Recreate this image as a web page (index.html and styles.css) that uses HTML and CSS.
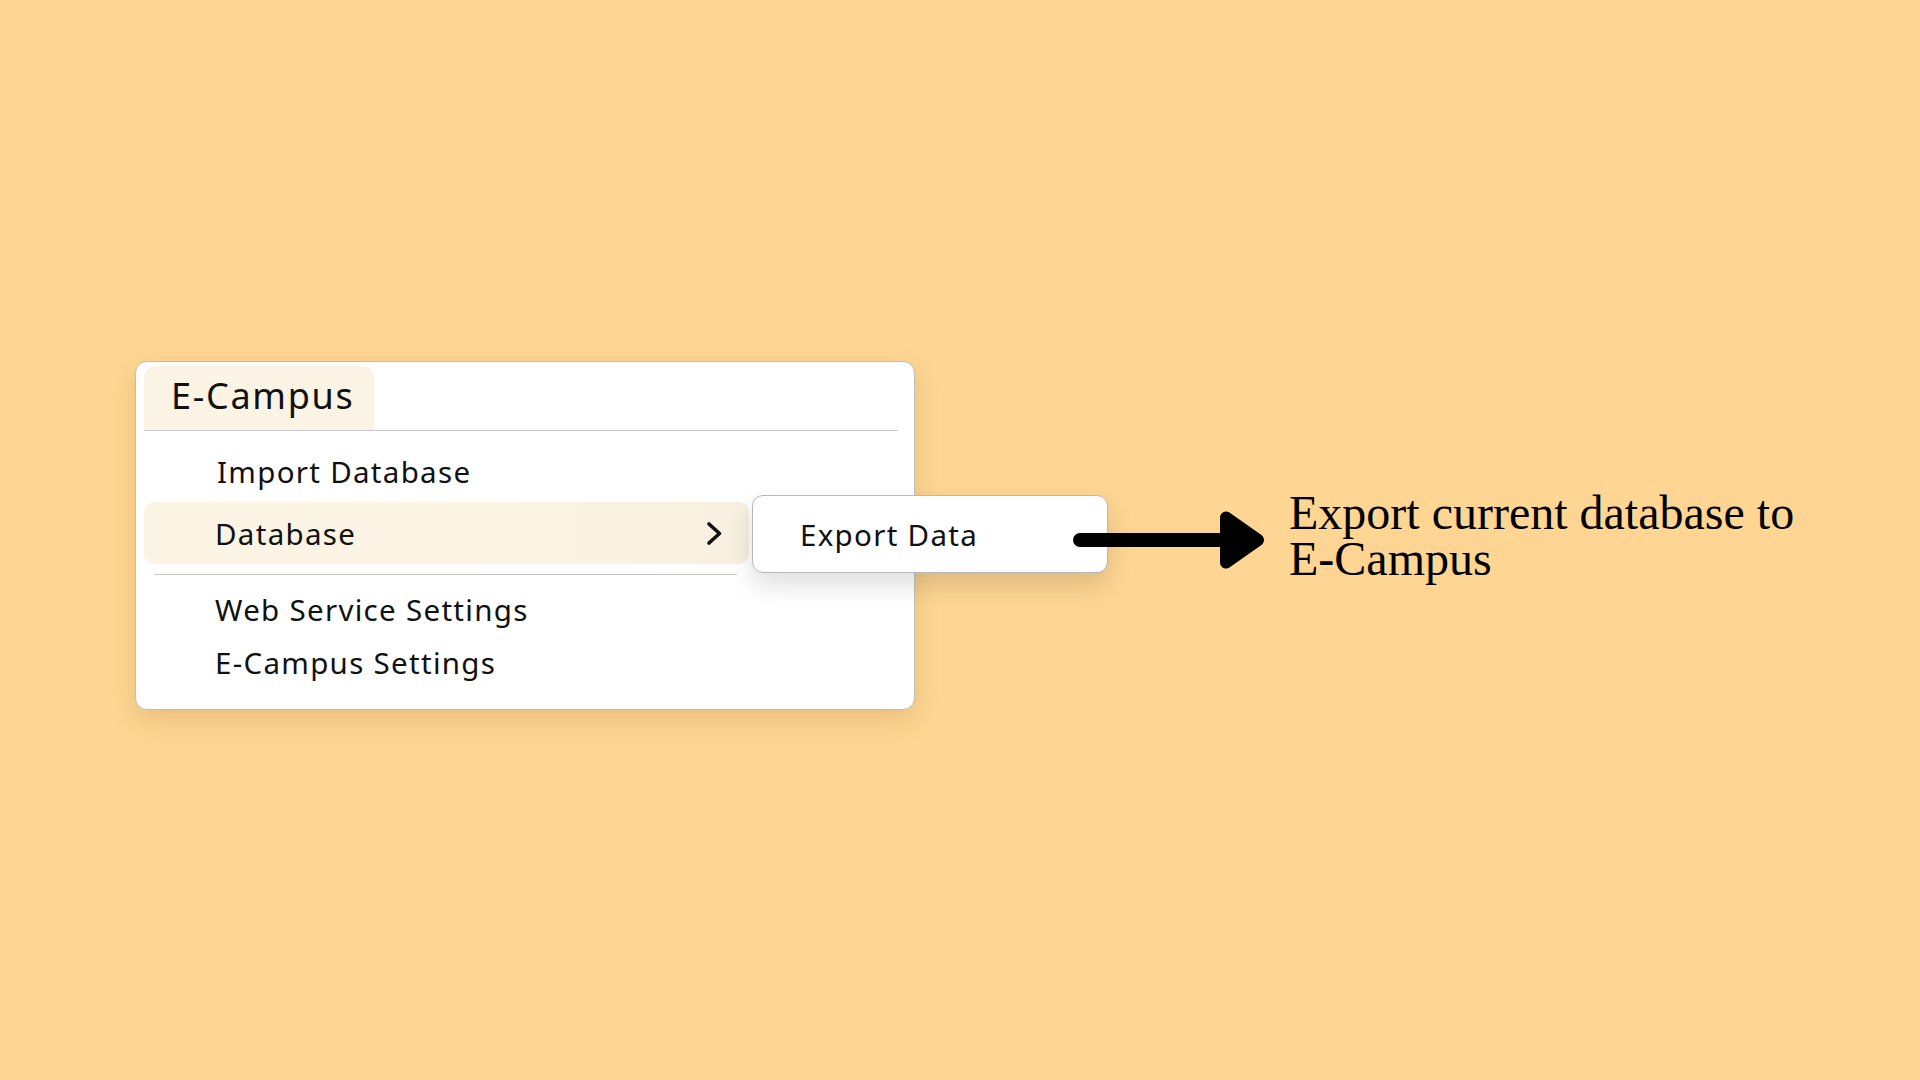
FILE: index.html
```html
<html>
	<head>
		<title>E-Campus menu</title>
		<link rel="stylesheet" href="styles.css">
	</head>
	<body>
		<div class="stage">
			<div class="menu">
				<div class="menu_head">
					<span class="menu_title">E-Campus</span>
				</div>
				<div class="menu_sep"></div>
				<div class="menu_item first">Import Database</div>
				<div class="menu_item has_sub">
					<span>Database</span>
					<svg class="chevron" width="17" height="25" viewBox="0 0 17 25">
						<path d="M3 3 L13.5 12.5 L3 22" fill="none" stroke="#111" stroke-width="3.6" stroke-linecap="round" stroke-linejoin="round"/>
					</svg>
					<div class="submenu">
						<div class="submenu_item">Export Data</div>
					</div>
				</div>
				<div class="menu_sep short"></div>
				<div class="menu_item small">Web Service Settings</div>
				<div class="menu_item small">E-Campus Settings</div>
			</div>
			<div class="callout">
				<svg class="arrow" width="200" height="64" viewBox="0 0 200 64">
					<line x1="14" y1="32" x2="162" y2="32" stroke="#000" stroke-width="14" stroke-linecap="round"/>
					<polygon points="160,9.5 192,32 160,54.5" fill="#000" stroke="#000" stroke-width="12" stroke-linejoin="round"/>
				</svg>
				<div class="callout_text">Export current database to<br>E-Campus</div>
			</div>
		</div>
	</body>
</html>
```

FILE: styles.css
```css
body,html{
	margin:0;
	background:#fed592;
	font-family:"Noto Sans", sans-serif;
	color:#111;
}
.stage{
	display:flex;
	align-items:center;
	padding:361px 0 0 135px;
}
.menu{
	width:780px;
	background:#fff;
	border:1px solid #bdbdbd;
	border-radius:12px;
	padding:4px 16px 20px 8px;
	box-sizing:border-box;
	box-shadow:0 10px 24px rgba(120,80,20,0.16);
}
.menu_head{
	display:flex;
}
.menu_title{
	background:#fbf4e4;
	border-radius:12px 12px 0 0;
	height:64px;
	box-sizing:border-box;
	padding:0 20px 5px 27px;
	display:flex;
	align-items:center;
	font-size:36px;
	letter-spacing:1.7px;
}
.menu_sep{
	height:1px;
	background:#c9c9c9;
}
.menu_sep.short{
	margin:10px 161px 8px 10px;
}
.menu_item{
	height:62px;
	display:flex;
	align-items:center;
	padding-left:73px;
	font-size:29.5px;
	letter-spacing:1.3px;
	position:relative;
}
.menu_item.first{
	margin-top:9px;
}
.menu_item.small{
	height:53px;
	padding-left:71px;
}
.has_sub{
	width:605px;
	box-sizing:border-box;
	background:linear-gradient(90deg,#fbf4e5 0%,#fbf3e2 80%,#f7efe0 100%);
	border-radius:10px;
	justify-content:space-between;
	padding-right:26px;
	padding-left:71px;
}
.submenu{
	position:absolute;
	left:608px;
	top:-7px;
	width:356px;
	height:78px;
	box-sizing:border-box;
	background:#fff;
	border:1px solid #b9b9b9;
	border-radius:11px;
	box-shadow:0 12px 26px rgba(0,0,0,0.13);
	display:flex;
	align-items:center;
	padding-left:47px;
	z-index:1;
}
.submenu_item{
	font-size:29.5px;
	letter-spacing:1.3px;
}
.callout{
	display:flex;
	align-items:center;
	margin-left:151px;
	position:relative;
	z-index:2;
}
.arrow{
	margin-top:9px;
}
.callout_text{
	margin-left:23px;
	font-family:"Liberation Serif", serif;
	font-size:48px;
	line-height:46px;
	color:#000;
}
```
